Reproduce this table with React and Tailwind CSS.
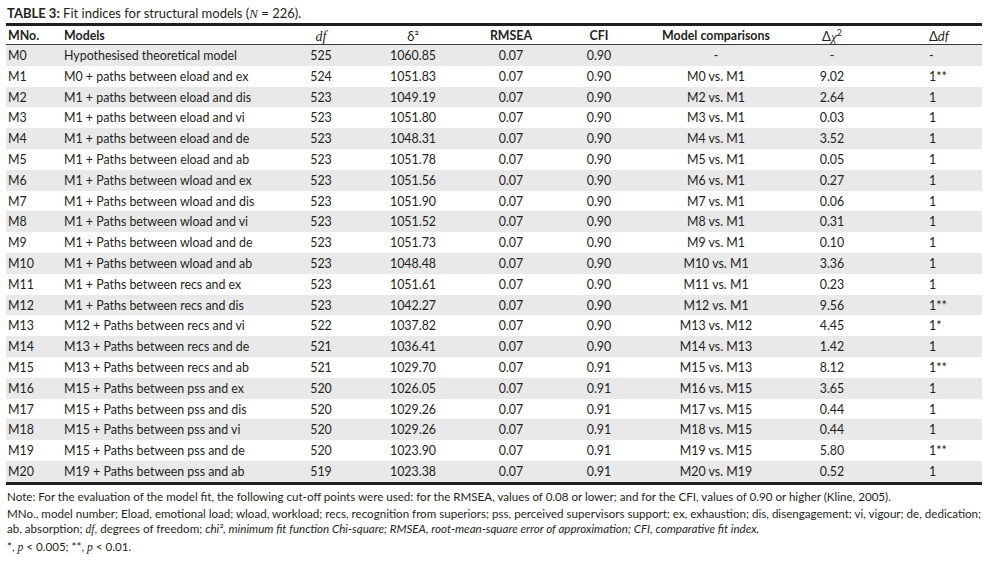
import React from "react";

const rows = [
  ["M0", "Hypothesised theoretical model", "525", "1060.85", "0.07", "0.90", "-", "-", "-"],
  ["M1", "M0 + paths between eload and ex", "524", "1051.83", "0.07", "0.90", "M0 vs. M1", "9.02", "1**"],
  ["M2", "M1 + paths between eload and dis", "523", "1049.19", "0.07", "0.90", "M2 vs. M1", "2.64", "1"],
  ["M3", "M1 + paths between eload and vi", "523", "1051.80", "0.07", "0.90", "M3 vs. M1", "0.03", "1"],
  ["M4", "M1 + paths between eload and de", "523", "1048.31", "0.07", "0.90", "M4 vs. M1", "3.52", "1"],
  ["M5", "M1 + Paths between eload and ab", "523", "1051.78", "0.07", "0.90", "M5 vs. M1", "0.05", "1"],
  ["M6", "M1 + Paths between wload and ex", "523", "1051.56", "0.07", "0.90", "M6 vs. M1", "0.27", "1"],
  ["M7", "M1 + Paths between wload and dis", "523", "1051.90", "0.07", "0.90", "M7 vs. M1", "0.06", "1"],
  ["M8", "M1 + Paths between wload and vi", "523", "1051.52", "0.07", "0.90", "M8 vs. M1", "0.31", "1"],
  ["M9", "M1 + Paths between wload and de", "523", "1051.73", "0.07", "0.90", "M9 vs. M1", "0.10", "1"],
  ["M10", "M1 + Paths between wload and ab", "523", "1048.48", "0.07", "0.90", "M10 vs. M1", "3.36", "1"],
  ["M11", "M1 + Paths between recs and ex", "523", "1051.61", "0.07", "0.90", "M11 vs. M1", "0.23", "1"],
  ["M12", "M1 + Paths between recs and dis", "523", "1042.27", "0.07", "0.90", "M12 vs. M1", "9.56", "1**"],
  ["M13", "M12 + Paths between recs and vi", "522", "1037.82", "0.07", "0.90", "M13 vs. M12", "4.45", "1*"],
  ["M14", "M13 + Paths between recs and de", "521", "1036.41", "0.07", "0.90", "M14 vs. M13", "1.42", "1"],
  ["M15", "M13 + Paths between recs and ab", "521", "1029.70", "0.07", "0.91", "M15 vs. M13", "8.12", "1**"],
  ["M16", "M15 + Paths between pss and ex", "520", "1026.05", "0.07", "0.91", "M16 vs. M15", "3.65", "1"],
  ["M17", "M15 + Paths between pss and dis", "520", "1029.26", "0.07", "0.91", "M17 vs. M15", "0.44", "1"],
  ["M18", "M15 + Paths between pss and vi", "520", "1029.26", "0.07", "0.91", "M18 vs. M15", "0.44", "1"],
  ["M19", "M15 + Paths between pss and de", "520", "1023.90", "0.07", "0.91", "M19 vs. M15", "5.80", "1**"],
  ["M20", "M19 + Paths between pss and ab", "519", "1023.38", "0.07", "0.91", "M20 vs. M19", "0.52", "1"],
];

const grid =
  "grid grid-cols-[56px_218px_82px_102px_94px_82px_152px_80px_110px] items-center";

const serif = "font-['Liberation_Serif',serif] italic";

export default function App() {
  return (
    <div className="w-[999px] h-[566px] bg-white text-[#231f20] font-['Lato',sans-serif] pl-[6px] pt-[5px]">
      <div className="text-[13px] leading-[16px] pl-[1px]">
        <span className="font-bold">TABLE 3:</span> Fit indices for structural models (
        <span className={serif}>N</span> = 226).
      </div>
      <div className="w-[976px] mt-[1px] border-t-[3px] border-[#231f20]">
        <div className={`${grid} h-[19px] text-[12.4px] border-b-[1.5px] border-[#3a3a3a]`}>
          <div className="pl-[2px] font-bold">MNo.</div>
          <div className="pl-[2px] font-bold">Models</div>
          <div className={`text-center text-[14px] ${serif}`}>df</div>
          <div className="text-center text-[13px]">δ²</div>
          <div className="text-center font-bold">RMSEA</div>
          <div className="text-center font-bold">CFI</div>
          <div className="text-center font-bold">Model comparisons</div>
          <div className="text-center text-[13px]">
            Δ<span className={serif}>χ</span>
            <sup className="text-[9px]">2</sup>
          </div>
          <div className="pl-[57px] text-[13px]">
            Δ<span className="italic">df</span>
          </div>
        </div>
        {rows.map((r, i) => (
          <div
            key={r[0]}
            className={`${grid} h-[20.8px] pt-[2px] text-[12.4px] ${i % 2 === 0 ? "bg-[#e9e9ea]" : "bg-white"}`}
          >
            <div className="pl-[2px]">{r[0]}</div>
            <div className="pl-[2px] whitespace-nowrap">{r[1]}</div>
            <div className="text-center">{r[2]}</div>
            <div className="text-center">{r[3]}</div>
            <div className="text-center">{r[4]}</div>
            <div className="text-center">{r[5]}</div>
            <div className="text-center">{r[6]}</div>
            <div className="text-center">{r[7]}</div>
            <div className="pl-[57px]">{r[8]}</div>
          </div>
        ))}
        <div className="border-t-[3px] border-[#231f20]" />
      </div>
      <div className="text-[11.6px] leading-[14.5px] pt-[5px] pl-[1px] flex flex-col gap-[3px] whitespace-nowrap">
        <div>
          Note: For the evaluation of the model fit, the following cut-off points were used: for the
          RMSEA, values of 0.08 or lower; and for the CFI, values of 0.90 or higher (Kline, 2005).
        </div>
        <div>
          MNo., model number; Eload, emotional load; wload, workload; recs, recognition from
          superiors; pss, perceived supervisors support; ex, exhaustion; dis, disengagement; vi,
          vigour; de, dedication;
          <br />
          ab, absorption; <span className={serif}>df</span>, degrees of freedom;{" "}
          <span className="italic">
            chi², minimum fit function Chi-square; RMSEA, root-mean-square error of approximation;
            CFI, comparative fit index.
          </span>
        </div>
        <div>
          *, <span className={serif}>p</span> &lt; 0.005; **, <span className={serif}>p</span> &lt;
          0.01.
        </div>
      </div>
    </div>
  );
}
